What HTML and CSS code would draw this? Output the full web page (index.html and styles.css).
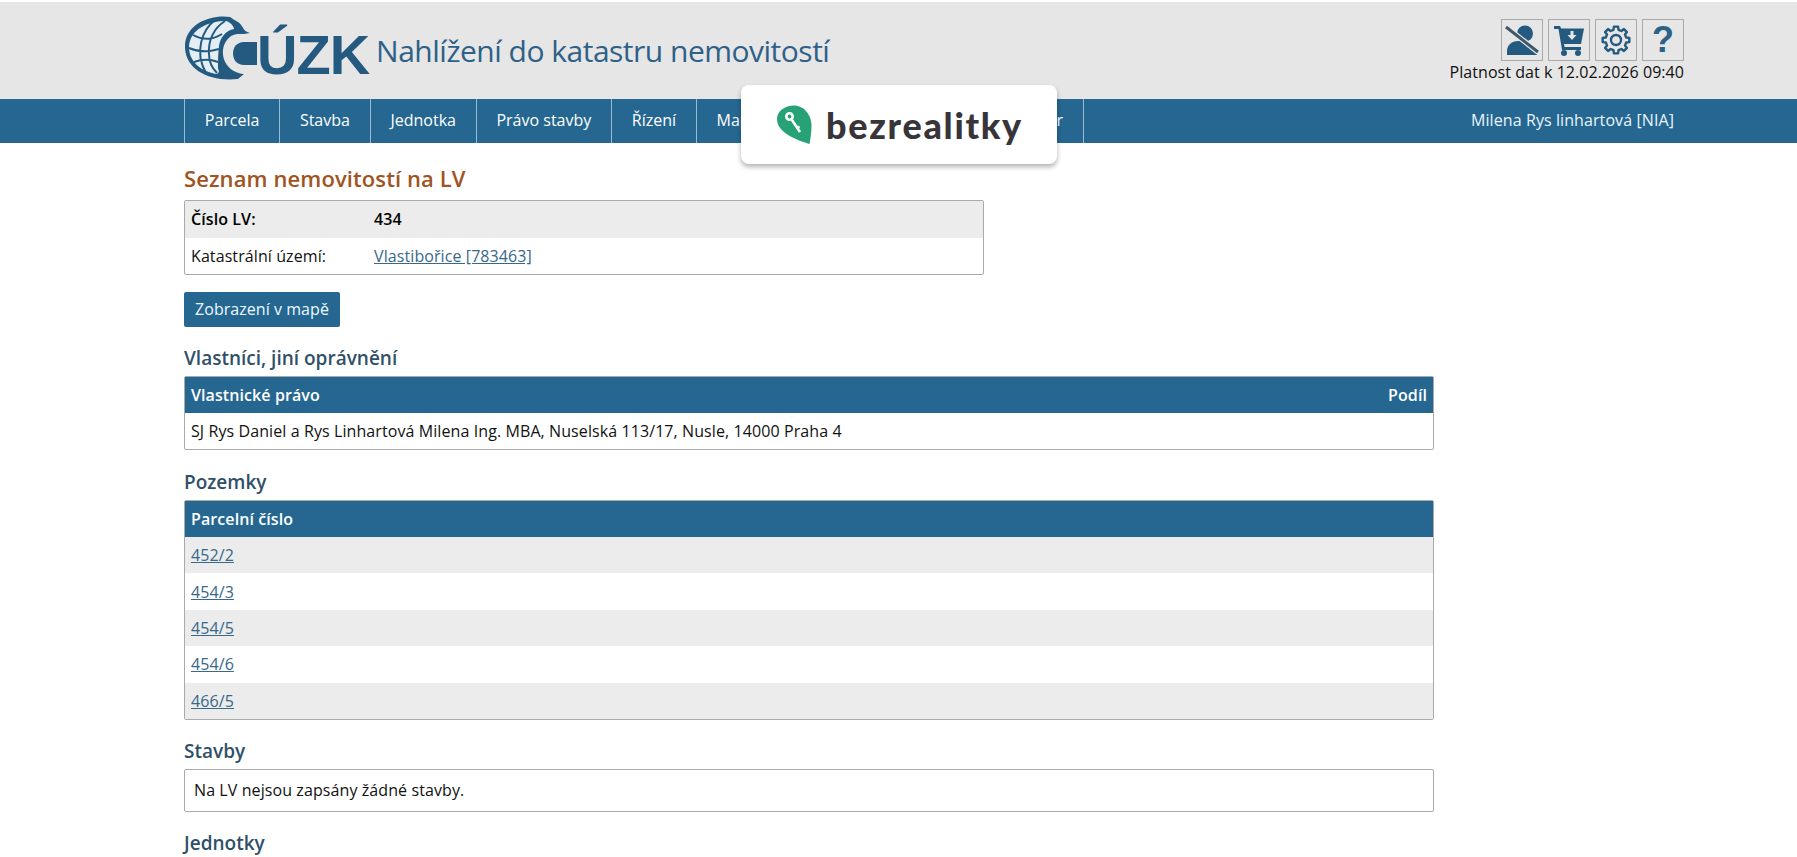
FILE: index.html
```html
<!DOCTYPE html>
<html lang="cs">
<head>
<meta charset="utf-8">
<title>Nahlížení do katastru nemovitostí</title>
<link rel="stylesheet" href="styles.css">
</head>
<body>
<header class="top">
  <div class="top-inner">
    <a class="logo" href="#">
      <svg class="globe" width="76" height="66" viewBox="0 0 76 66">
        <path class="ink" d="M46 3C30 0 0 8 1 34c1 22 25 34 53 31l6-5C44 58 38 46 39 36c1-8 6-15 14-16 5 0 9 0 13-1-8-2-6-7-12-11-4-2-6-4-8-5z"/>
        <path class="panel" d="M42 7C26 7 6 14 5 33c0 14 11 24 27 27 2 0 4-2 2-5 0-5 0-15 1-23 1-8 7-16 15-17 0-3-4-7-8-8z"/>
        <path class="grid" d="M31 6C18 16 10 38 22 59M41 7C30 14 24 26 25 40c0 7 3 14 8 19M9 21c9 5 18 6 29-1M5 34c9 4 20 4 30 1M10 48c8-3 16-3 24 0"/>
        <path class="ink" d="M60 28h13v23H60c-7 0-11-5-11-11.500S53 28 60 28z"/>
      </svg>
      <span class="logo-text">ÚZK</span>
    </a>
    <h1 class="app-title">Nahlížení do katastru nemovitostí</h1>
    <div class="top-right">
      <div class="tools">
        <a class="tool" href="#"><svg viewBox="0 0 40 40"><circle class="ink" cx="23" cy="13.500" r="8"/><path class="ink" d="M5 35v-4c0-6 5-10 11-10h6c3 0 5 1 7 3l6 11z"/><path class="halo" d="M4 7l32 25"/><path class="slash" d="M4 7l32 25"/></svg></a>
        <a class="tool" href="#"><svg viewBox="0 0 40 40"><path class="ink" d="M5 6h6l1.200 2.500H35L32 24H15l.6 3H32v3H13L9.500 9H5z"/><circle class="ink" cx="15" cy="33" r="3"/><circle class="ink" cx="29" cy="33" r="3"/><path class="arrow" d="M21.500 11h3v4h3l-4.500 5-4.500-5h3z"/></svg></a>
        <a class="tool" href="#"><svg viewBox="0 0 40 40"><path class="gear" d="M17.460 9.810L17.890 6.670H22.110L22.540 9.810L25.410 11L27.940 9.080L30.920 12.060L29 14.590L30.190 17.460L33.330 17.890V22.110L30.190 22.540L29 25.410L30.920 27.940L27.940 30.920L25.410 29L22.540 30.190L22.110 33.330H17.890L17.460 30.190L14.590 29L12.060 30.920L9.080 27.940L11 25.410L9.810 22.540L6.670 22.110V17.890L9.810 17.460L11 14.590L9.080 12.060L12.060 9.080L14.590 11z"/><circle class="gear" cx="20" cy="20" r="5"/></svg></a>
        <a class="tool tool-q" href="#">?</a>
      </div>
      <div class="validity">Platnost dat k 12.02.2026 09:40</div>
    </div>
  </div>
</header>
<nav class="nav">
  <div class="nav-inner">
    <ul class="menu">
      <li><a href="#">Parcela</a></li>
      <li><a href="#">Stavba</a></li>
      <li><a href="#">Jednotka</a></li>
      <li><a href="#">Právo stavby</a></li>
      <li><a href="#">Řízení</a></li>
      <li class="item-map"><a href="#">Mapa</a></li>
      <li class="item-last"><a href="#">Registr</a></li>
    </ul>
    <div class="user">Milena Rys linhartová [NIA]</div>
  </div>
</nav>
<div class="ad">
  <svg class="ad-pin" width="36" height="40" viewBox="0 0 36 40"><path class="pin" d="M17 .5C27 .5 34.500 10 34.500 21c0 6-1 12-2 18C20 35 0 28 0 14 0 6 8 .5 17 .5z"/><circle class="key" cx="12.500" cy="11.500" r="3.200"/><path class="key" d="M15 15l8 12M20 23l2.500-1.500"/></svg>
  <span class="ad-text">bezrealitky</span>
</div>
<main class="page">
  <h2 class="page-title">Seznam nemovitostí na LV</h2>
  <table class="tbl tbl-info">
    <tr class="odd strong"><td class="lbl">Číslo LV:</td><td>434</td></tr>
    <tr><td class="lbl">Katastrální území:</td><td><a href="#">Vlastibořice [783463]</a></td></tr>
  </table>
  <a class="btn" href="#">Zobrazení v mapě</a>
  <h3 class="sec">Vlastníci, jiní oprávnění</h3>
  <table class="tbl tbl-wide tbl-owners">
    <tr class="head"><th>Vlastnické právo</th><th class="right">Podíl</th></tr>
    <tr><td colspan="2">SJ Rys Daniel a Rys Linhartová Milena Ing. MBA, Nuselská 113/17, Nusle, 14000 Praha 4</td></tr>
  </table>
  <h3 class="sec">Pozemky</h3>
  <table class="tbl tbl-wide tbl-parcels">
    <tr class="head"><th>Parcelní číslo</th></tr>
    <tr class="odd"><td><a href="#">452/2</a></td></tr>
    <tr><td><a href="#">454/3</a></td></tr>
    <tr class="odd"><td><a href="#">454/5</a></td></tr>
    <tr><td><a href="#">454/6</a></td></tr>
    <tr class="odd"><td><a href="#">466/5</a></td></tr>
  </table>
  <h3 class="sec">Stavby</h3>
  <div class="note">Na LV nejsou zapsány žádné stavby.</div>
  <h3 class="sec">Jednotky</h3>
</main>
</body>
</html>
```
FILE: styles.css
```css
html, body { margin: 0; padding: 0; height: 857px; overflow: hidden; background: #fff; }
body { font-family: "Open Sans", "Noto Sans", sans-serif; font-size: 16px; color: #111; letter-spacing: 0.09px; position: relative; }
.top { margin-top: 2px; height: 97px; background: #e6e6e6; }
.top-inner { margin: 0 113px 0 184px; height: 97px; display: flex; align-items: flex-start; }
.logo { display: flex; align-items: flex-start; text-decoration: none; margin-top: 12px; height: 66px; }
.globe { display: block; flex: none; }
.ink { fill: #255a80; }
.panel { fill: #e4eef5; }
.grid { fill: none; stroke: #255a80; stroke-width: 2; }
.logo-text { font-family: "Liberation Sans", sans-serif; font-weight: 700; font-size: 56px; line-height: 58px; color: #255a80; letter-spacing: -1px; margin-left: -3px; margin-top: 12px; }
.app-title { margin: 29px 0 0 7px; font-weight: 400; font-size: 30px; line-height: 40px; color: #2e6088; letter-spacing: -0.5px; }
.top-right { margin-left: auto; display: flex; flex-direction: column; align-items: flex-end; }
.tools { display: flex; gap: 5px; margin-top: 17px; }
.tool { width: 42px; height: 42px; box-sizing: border-box; border: 1px solid #aaa; display: flex; align-items: center; justify-content: center; text-decoration: none; }
.tool svg { width: 40px; height: 40px; display: block; }
.halo { stroke: #e6e6e6; stroke-width: 5.500; fill: none; }
.slash { stroke: #3f5868; stroke-width: 3; fill: none; }
.arrow { fill: #e6e6e6; }
.gear { fill: none; stroke: #255a80; stroke-width: 2.400; stroke-linejoin: round; }
.tool-q { font-family: "Liberation Sans", sans-serif; font-weight: 700; font-size: 36px; line-height: 40px; color: #2a6288; }
.validity { line-height: 22px; letter-spacing: 0.05px; }
.nav { height: 44px; background: #256791; }
.nav-inner { margin: 0 113px 0 184px; height: 44px; display: flex; justify-content: space-between; }
.menu { list-style: none; margin: 0; padding: 0; display: flex; border-left: 1px solid #9dbbd0; }
.menu li { border-right: 1px solid #9dbbd0; }
.menu a { display: block; padding: 0 19.750px; line-height: 42px; color: #fff; text-decoration: none; letter-spacing: 0; }
.menu .item-map { width: 180px; }
.menu .item-last { width: 205px; text-align: right; }
.user { color: #eaf4fb; line-height: 42px; padding-right: 10px; }
.ad { position: absolute; left: 741px; top: 85px; width: 316px; height: 79px; box-sizing: border-box; padding-left: 36px; background: #fff; border-radius: 8px; box-shadow: 0 3px 5px rgba(0,0,0,.3); display: flex; align-items: center; gap: 13px; }
.ad-pin { flex: none; }
.pin { fill: #27a277; }
.key { fill: none; stroke: #fff; stroke-width: 2.600; }
.ad-text { font-family: Lato, sans-serif; font-weight: 900; font-size: 36px; color: #38353a; letter-spacing: 1.7px; }
.page { margin-left: 184px; width: 1250px; }
.page-title { margin: 0; padding-top: 20px; font-size: 22px; line-height: 30px; font-weight: 600; color: #a0541f; letter-spacing: 0.1px; }
.tbl { border-collapse: separate; border-spacing: 0; border: 1px solid #aaa; border-radius: 2px; }
.tbl td, .tbl th { padding: 0 6px; height: 36px; text-align: left; }
.tbl-info { width: 800px; margin-top: 7px; }
.tbl-info td { height: 36.500px; }
.tbl-wide { width: 1250px; }
.tbl-owners { margin-bottom: 1px; }
.tbl-parcels td { height: 36.400px; }
.lbl { width: 171px; }
.odd td { background: #ececec; }
.strong td { font-weight: 600; color: #000; }
.head th { background: #256791; color: #fff; font-weight: 600; }
.tbl th.right { text-align: right; }
a { color: #38688a; }
.btn { display: block; width: fit-content; margin-top: 17px; background: #256791; color: #eef8ff; text-decoration: none; padding: 0 11px; line-height: 35px; border-radius: 2px; letter-spacing: 0.05px; }
.sec { margin: 0; font-size: 19px; line-height: 28px; font-weight: 600; color: #2f5068; padding-top: 17px; padding-bottom: 4px; letter-spacing: 0; }
.note { width: 1250px; box-sizing: border-box; height: 43px; border: 1px solid #aaa; border-radius: 2px; line-height: 41px; padding-left: 9px; }
```
